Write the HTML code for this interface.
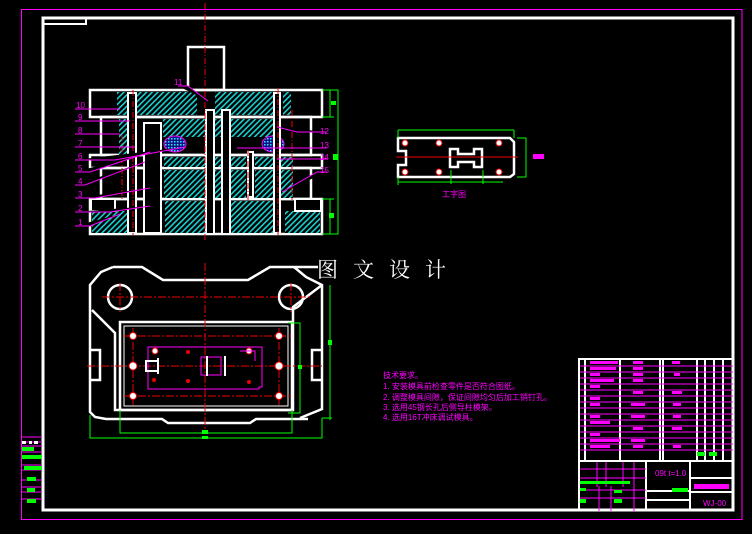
<!DOCTYPE html>
<html><head><meta charset="utf-8"><style>
html,body{margin:0;padding:0;background:#000;width:752px;height:534px;overflow:hidden}
svg{display:block}
.m{fill:#ff00ff;font-family:"Liberation Sans","Noto Sans CJK SC",sans-serif;font-size:8px}
</style></head><body>
<svg width="752" height="534" viewBox="0 0 752 534" xmlns="http://www.w3.org/2000/svg">
<defs>
<pattern id="h" width="4" height="4" patternUnits="userSpaceOnUse" patternTransform="rotate(45)">
<rect width="4" height="4" fill="#000"/><rect width="1.6" height="4" fill="#19d0d0"/></pattern>
<pattern id="x" width="3" height="3" patternUnits="userSpaceOnUse"><rect width="3" height="3" fill="#118"/><rect width="1.5" height="1.5" fill="#2ee"/></pattern>
</defs>
<rect width="752" height="534" fill="#000"/>
<rect x="21.5" y="9.5" width="720.5" height="510" fill="none" stroke="#ff00ff" stroke-width="1"/>
<rect x="43" y="18" width="690" height="492" fill="none" stroke="#fff" stroke-width="3"/>
<rect x="43" y="18" width="43" height="6" fill="none" stroke="#fff" stroke-width="2"/>
<!-- left strip -->
<g stroke="#ff00ff" stroke-width="1"><line x1="21" y1="437" x2="42" y2="437"/><line x1="21" y1="442" x2="42" y2="442"/><line x1="21" y1="446" x2="42" y2="446"/><line x1="21" y1="452" x2="42" y2="452"/><line x1="21" y1="458" x2="42" y2="458"/><line x1="21" y1="465" x2="42" y2="465"/><line x1="21" y1="470" x2="42" y2="470"/><line x1="21" y1="480" x2="42" y2="480"/><line x1="21" y1="487" x2="42" y2="487"/><line x1="21" y1="492" x2="42" y2="492"/><line x1="21" y1="499" x2="42" y2="499"/></g>
<g fill="#00ff00"><rect x="22" y="447" width="12" height="4"/><rect x="22" y="455" width="20" height="4"/><rect x="24" y="466" width="18" height="4"/><rect x="27" y="477" width="9" height="4"/><rect x="27" y="488" width="8" height="4"/><rect x="27" y="499" width="9" height="4"/></g>
<g fill="#fff"><rect x="22" y="441" width="4" height="3"/><rect x="29" y="441" width="3" height="3"/><rect x="34" y="441" width="4" height="3"/></g>

<!-- Section view -->
<g stroke="#fff" stroke-width="2.5" fill="none">
<rect x="188" y="47" width="36" height="43"/>
<rect x="90" y="90" width="232" height="27"/>
<rect x="101" y="117" width="210" height="38"/>
<rect x="90" y="155" width="232" height="13"/>
<rect x="101" y="168" width="210" height="31"/>
<rect x="90" y="199" width="232" height="35"/>
</g>
<g fill="url(#h)">
<rect x="117" y="92" width="80" height="23"/><rect x="215" y="92" width="60" height="23"/><rect x="283" y="92" width="8" height="23"/>
<rect x="119" y="119" width="16" height="36"/><rect x="163" y="119" width="82" height="18"/><rect x="225" y="119" width="48" height="18"/>
<rect x="164" y="157" width="82" height="10"/><rect x="255" y="157" width="38" height="10"/>
<rect x="164" y="170" width="82" height="28"/><rect x="255" y="170" width="38" height="28"/>
<rect x="92" y="211" width="45" height="22"/><rect x="165" y="201" width="42" height="32"/><rect x="228" y="201" width="48" height="32"/><rect x="285" y="211" width="35" height="22"/>
</g>
<ellipse cx="175" cy="144" rx="11" ry="8" fill="url(#x)" stroke="#ff00ff" stroke-width="1"/>
<ellipse cx="273" cy="144" rx="11" ry="8" fill="url(#x)" stroke="#ff00ff" stroke-width="1"/>
<g stroke="#fff" stroke-width="2" fill="#000">
<rect x="128" y="93" width="8" height="140"/><rect x="144" y="123" width="17" height="110"/>
<rect x="206" y="110" width="8" height="124"/><rect x="222" y="110" width="8" height="124"/>
<rect x="248" y="152" width="5" height="45"/><rect x="274" y="93" width="6" height="140"/>
<rect x="91" y="199" width="24" height="12"/><rect x="295" y="199" width="26" height="12"/>
</g>
<g stroke="#e00" stroke-width="1" stroke-dasharray="6 2 1 2">
<line x1="205" y1="3" x2="205" y2="240"/><line x1="133" y1="90" x2="133" y2="235"/><line x1="278" y1="88" x2="278" y2="235"/><line x1="248" y1="150" x2="248" y2="200"/><line x1="122" y1="135" x2="122" y2="200"/><line x1="292" y1="110" x2="292" y2="200"/>
</g>
<g stroke="#00ff00" stroke-width="1" fill="none"><path d="M322 90h12M322 117h12M330 90v27"/><path d="M322 90h16v144h-16M322 199h12M330 199v35"/></g>
<g fill="#00ff00"><rect x="331" y="101" width="5" height="4"/><rect x="333" y="154" width="5" height="6"/><rect x="329" y="213" width="5" height="5"/></g>
<g stroke="#ff00ff" stroke-width="1">
<path d="M75 109h45M75 121h55M75 134h45M75 147h60M75 160h40l70-13M75 172h15l60-20M75 185h10l60-23M75 198h20l55-10M75 212h35l40-6M75 226h15l30-12"/>
<path d="M178 86h10l20 15M327 132h-30l-20-5M327 148h-90M327 159h-50M327 172h-10l-35 20"/>
</g>
<g class="m"><text x="76" y="108">10</text><text x="78" y="120">9</text><text x="78" y="133">8</text><text x="78" y="146">7</text><text x="78" y="159">6</text><text x="78" y="171">5</text><text x="78" y="184">4</text><text x="78" y="197">3</text><text x="78" y="211">2</text><text x="78" y="225">1</text>
<text x="174" y="85">11</text><text x="320" y="134">12</text><text x="320" y="148">13</text><text x="320" y="160">14</text><text x="320" y="173">15</text></g>

<!-- Strip layout -->
<g stroke="#fff" stroke-width="2.5" fill="none">
<path d="M398 138h112l4 4v32l-4 3h-112v-12h8v-14h-8z"/>
<path d="M450 149h8v5h16v-5h8v18h-8v-5h-16v5h-8z"/>
</g>
<line x1="396" y1="157" x2="518" y2="157" stroke="#e00" stroke-width="1"/>
<g fill="#fff" stroke="#e00" stroke-width="1"><circle cx="405" cy="143" r="3"/><circle cx="439" cy="143" r="3"/><circle cx="499" cy="143" r="3"/><circle cx="405" cy="172" r="3"/><circle cx="439" cy="172" r="3"/><circle cx="499" cy="172" r="3"/></g>
<g stroke="#00ff00" stroke-width="1" fill="none"><path d="M398 130h116M398 130v8M514 130v8M398 182h105M398 177v8M451 170v14M483 170v14M517 138h9v39h-9"/></g>
<rect x="533" y="154" width="11" height="5" fill="#ff00ff"/>
<text x="442" y="197" class="m">工字图</text>

<!-- Plan view -->
<g stroke="#fff" stroke-width="2.5" fill="none">
<path d="M113 267h29l21 13h85l22-13h24l24-0"/>
<path d="M113 267l-12 5-11 13v127l5 5 11 2h56l6 4h82l6-4h52v0"/>
<path d="M300 418l22-9V285l-16 -8-12-10"/>
<path d="M92 310l23 23v77h178v-103l29-22"/>
<rect x="120" y="322" width="172" height="88"/>
<rect x="124" y="326" width="164" height="80" stroke-width="1"/>
<path d="M90 350h10v30h-10M322 350h-10v30h10"/>
<circle cx="120" cy="297" r="12"/><circle cx="291" cy="297" r="12"/>
</g>
<g stroke="#e00" stroke-width="1" stroke-dasharray="8 2 2 2"><line x1="205" y1="263" x2="205" y2="430"/><line x1="102" y1="297" x2="310" y2="297"/><line x1="120" y1="283" x2="120" y2="312"/><line x1="291" y1="283" x2="291" y2="312"/><line x1="124" y1="336" x2="290" y2="336"/><line x1="87" y1="366" x2="322" y2="366"/><line x1="124" y1="396" x2="290" y2="396"/><line x1="133" y1="328" x2="133" y2="405"/><line x1="279" y1="328" x2="279" y2="405"/></g>
<g fill="#fff" stroke="#e00" stroke-width="1"><circle cx="133" cy="336" r="3.5"/><circle cx="133" cy="366" r="4"/><circle cx="133" cy="396" r="3.5"/><circle cx="279" cy="336" r="3.5"/><circle cx="279" cy="366" r="4"/><circle cx="279" cy="396" r="3.5"/><circle cx="155" cy="351" r="3"/><circle cx="249" cy="351" r="3"/></g>
<g stroke="#ff00ff" stroke-width="1" fill="none"><path d="M148 347h114v40h-3v2h-111zM240 351h15v10"/><path d="M201 357h20v18h-20z"/></g>
<g fill="none" stroke="#fff" stroke-width="2"><path d="M146 361h12v10h-12zM158 358v16M207 356v20M225 356v20"/></g>
<g fill="#e00"><circle cx="188" cy="352" r="2"/><circle cx="154" cy="380" r="2"/><circle cx="188" cy="381" r="2"/><circle cx="249" cy="382" r="2"/></g>
<g stroke="#00ff00" stroke-width="1" fill="none"><path d="M120 410v23h172v-23M90 415v23h232v-20M288 323h12v90h-12M322 418h10M330 285v135"/></g>
<g fill="#00ff00"><rect x="202" y="430" width="6" height="4"/><rect x="202" y="436" width="6" height="3"/><rect x="298" y="365" width="4" height="4"/><rect x="328" y="340" width="4" height="5"/></g>

<text x="317" y="277" fill="#fff" font-family="'Noto Serif CJK SC','Liberation Serif',serif" font-size="21" letter-spacing="15">图文设计</text>

<!-- tech requirements -->
<g class="m"><text x="383" y="378">技术要求。</text><text x="383" y="389">1.  安装模具前检查零件是否符合图纸。</text><text x="383" y="400">2.  调整模具间隙，保证间隙均匀后加工销钉孔。</text><text x="383" y="410">3.  选用45钢长孔后侧导柱模架。</text><text x="383" y="420">4.  选用16T冲床调试模具。</text></g>

<!-- title block -->
<g stroke="#fff" stroke-width="2" fill="none">
<rect x="579" y="359" width="154" height="151"/>
<path d="M579 461h154M646 461v49M690 461v49M690 478h43M690 492h43M585 360v100M620 360v100M660 360v100M663 360v100M697 360v100M705 360v100M714 360v100M723 360v100M646 491h44M646 500h44"/>
</g>
<g stroke="#ff00ff" stroke-width="1"><path d="M580 366h153M580 372h153M580 378h153M580 384h153M580 390h153M580 396h153M580 402h153M580 408h153M580 414h153M580 420h153M580 426h153M580 432h153M580 438h153M580 444h153M580 450h153"/><path d="M580 469h66M580 478h66M580 490h66M580 498h66M597 462v25M606 462v25M623 462v25M634 462v50M611 486v25M599 486v25"/></g>
<g fill="#ff00ff"><rect x="590" y="361" width="28" height="3"/><rect x="590" y="367" width="26" height="3"/><rect x="590" y="373" width="10" height="3"/><rect x="590" y="379" width="24" height="3"/><rect x="590" y="385" width="10" height="3"/><rect x="590" y="397" width="10" height="3"/><rect x="590" y="403" width="10" height="3"/><rect x="590" y="415" width="10" height="3"/><rect x="590" y="421" width="20" height="3"/><rect x="590" y="433" width="10" height="3"/><rect x="590" y="439" width="30" height="3"/><rect x="590" y="445" width="20" height="3"/>
<rect x="633" y="361" width="10" height="3"/><rect x="633" y="367" width="10" height="3"/><rect x="633" y="373" width="10" height="3"/><rect x="633" y="379" width="10" height="3"/><rect x="633" y="391" width="10" height="3"/><rect x="631" y="403" width="14" height="3"/><rect x="631" y="415" width="14" height="3"/><rect x="633" y="427" width="10" height="3"/><rect x="631" y="439" width="14" height="3"/><rect x="633" y="445" width="10" height="3"/>
<rect x="672" y="361" width="8" height="3"/><rect x="674" y="373" width="6" height="3"/><rect x="672" y="391" width="10" height="3"/><rect x="673" y="403" width="8" height="3"/><rect x="673" y="415" width="8" height="3"/><rect x="672" y="427" width="10" height="3"/><rect x="673" y="445" width="8" height="3"/>
<rect x="694" y="484" width="35" height="5"/></g>
<text x="655" y="476" class="m" font-size="9">09t t=1.0</text>
<text x="703" y="506" class="m">WJ-00</text>
<g fill="#00ff00"><rect x="697" y="452" width="8" height="4"/><rect x="709" y="452" width="8" height="4"/><rect x="580" y="481" width="50" height="3"/><rect x="580" y="488" width="6" height="3"/><rect x="614" y="490" width="8" height="3"/><rect x="580" y="499" width="6" height="4"/><rect x="614" y="499" width="8" height="4"/><rect x="672" y="488" width="16" height="4"/></g>
<line x1="742" y1="9" x2="742" y2="519" stroke="#ff00ff" stroke-width="1"/>
</svg>
</body></html>
